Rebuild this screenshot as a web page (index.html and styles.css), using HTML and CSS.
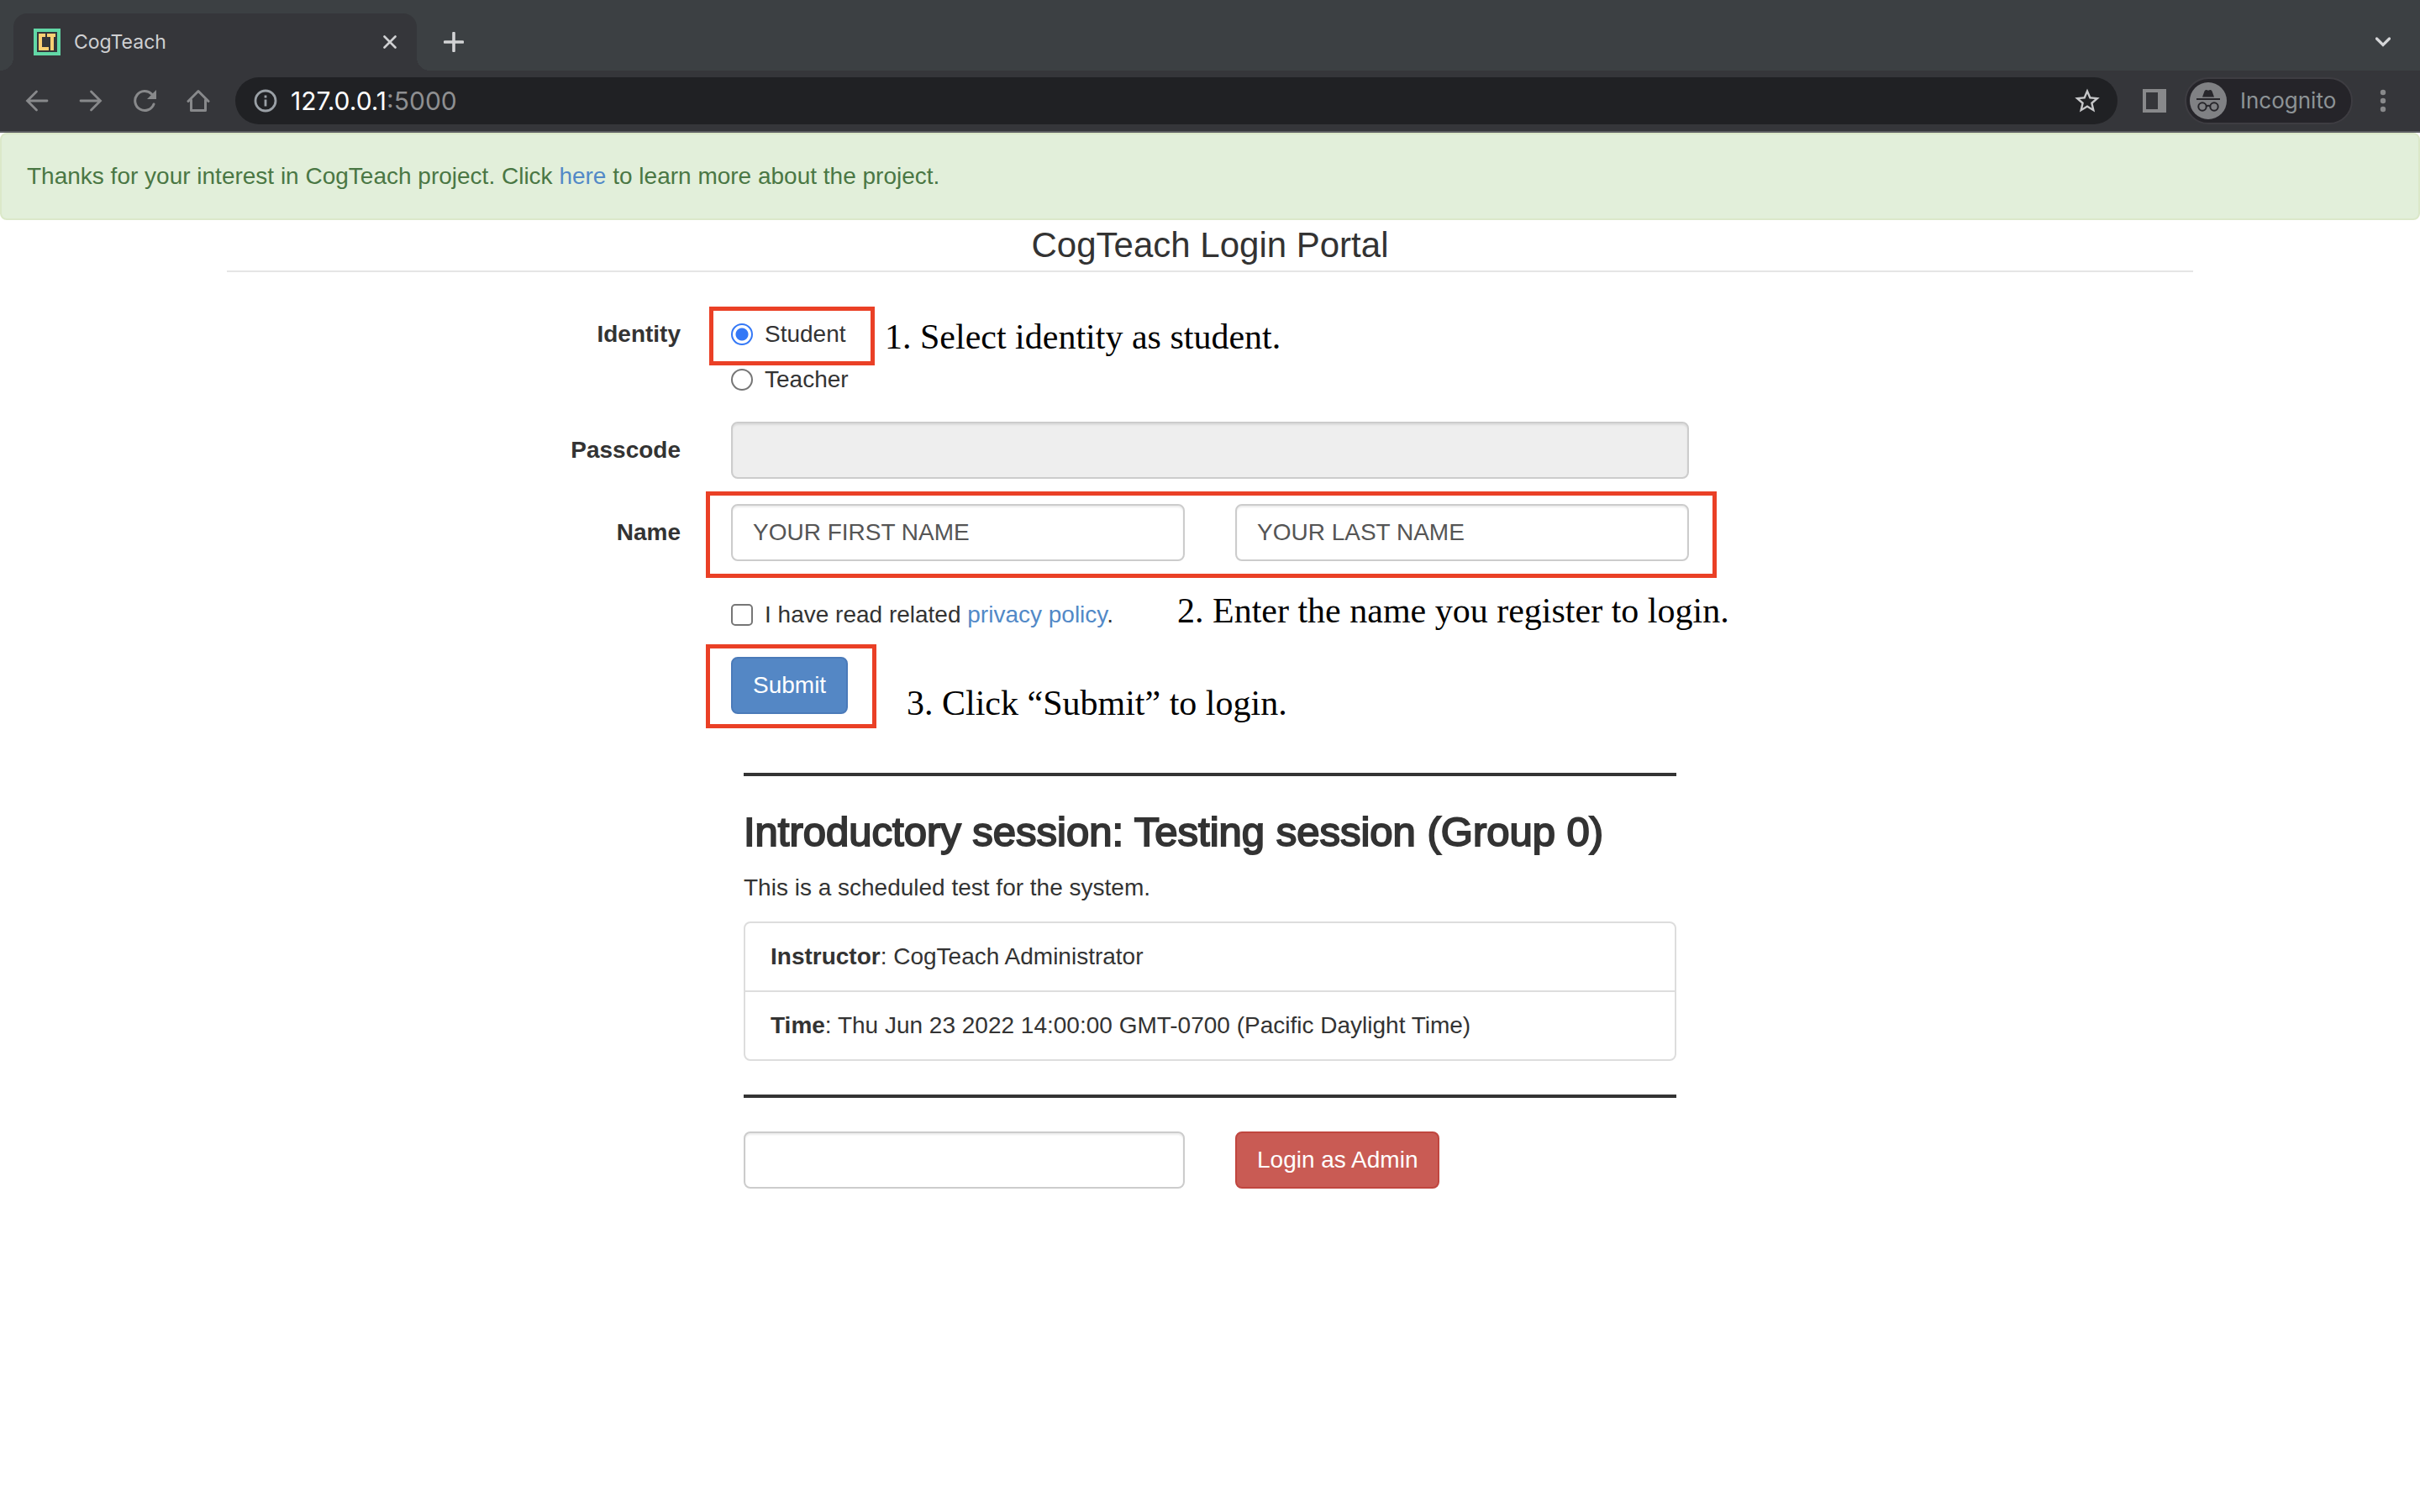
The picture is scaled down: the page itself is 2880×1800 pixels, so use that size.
FILE: index.html
```html
<!DOCTYPE html>
<html lang="en">
<head>
<meta charset="utf-8">
<title>CogTeach</title>
<link rel="stylesheet" href="styles.css">
</head>
<body>
<header class="browser">
  <div class="tabstrip">
    <div class="tab">
      <svg class="favicon" viewBox="0 0 32 32"><rect width="32" height="32" fill="#62d8a6"/><rect x="4" y="4" width="24" height="24" fill="#35363a"/><path d="M6 6h8v4h-4v12h8v4H6zM16 6h10v4h-2v16h-4V10h-4z" fill="#fbd073"/></svg>
      <span class="tab-title">CogTeach</span>
      <button class="icon-button" aria-label="Close tab"><svg width="16" height="16" viewBox="0 0 16 16"><path d="M1.500 1.500l13 13M14.500 1.500l-13 13" stroke="#cfd0d2" stroke-width="2.600" stroke-linecap="round"/></svg></button>
    </div>
    <button class="icon-button new-tab" aria-label="New tab"><svg width="24" height="24" viewBox="0 0 24 24"><path d="M12 1.500v21M1.500 12h21" stroke="#d2d3d5" stroke-width="3.600" stroke-linecap="round"/></svg></button>
    <button class="icon-button tab-search" aria-label="Search tabs"><svg width="18" height="12" viewBox="0 0 18 12"><path d="M1.500 2l7.500 7.500L16.500 2" fill="none" stroke="#d5d6d8" stroke-width="3.200" stroke-linecap="round"/></svg></button>
  </div>
  <div class="toolbar">
    <nav class="nav-buttons">
      <button class="icon-button" aria-label="Back"><svg width="28" height="28" viewBox="0 0 28 28"><path d="M13.500 3L2.500 14l11 11M3 14h23" fill="none" stroke="#88898b" stroke-width="2.800" stroke-linecap="round"/></svg></button>
      <button class="icon-button" aria-label="Forward"><svg width="28" height="28" viewBox="0 0 28 28"><path d="M14.500 3l11 11-11 11M25 14H2" fill="none" stroke="#88898b" stroke-width="2.800" stroke-linecap="round"/></svg></button>
      <button class="icon-button" aria-label="Reload"><svg width="28" height="28" viewBox="0 0 28 28"><path d="M22.500 6A11.500 11.500 0 1 0 25 18" fill="none" stroke="#88898b" stroke-width="3" stroke-linecap="round"/><path d="M28 1v11H17z" fill="#88898b"/></svg></button>
      <button class="icon-button" aria-label="Home"><svg width="28" height="28" viewBox="0 0 28 28"><path d="M2 14.500L14 2.500l12 12M5.500 13v12.500h17V13" fill="none" stroke="#88898b" stroke-width="3" stroke-linecap="round" stroke-linejoin="round"/></svg></button>
    </nav>
    <div class="address">
      <svg width="28" height="28" viewBox="0 0 28 28"><circle cx="14" cy="14" r="12" fill="none" stroke="#9aa0a6" stroke-width="2.800"/><path d="M14 12.500v8M14 7.500v3" stroke="#9aa0a6" stroke-width="2.800"/></svg>
      <span class="url">127.0.0.1<span class="port">:5000</span></span>
      <button class="icon-button" aria-label="Bookmark"><svg width="30" height="30" viewBox="0 0 24 24"><path d="M22 9.240l-7.190-.62L12 2 9.190 8.630 2 9.240l5.460 4.730L5.820 21 12 17.270 18.180 21l-1.630-7.030L22 9.240zM12 15.400l-3.760 2.270 1-4.280-3.320-2.880 4.380-.38L12 6.100l1.710 4.040 4.380.38-3.320 2.880 1 4.280L12 15.400z" fill="#c7c8ca" transform="translate(12 12) scale(1.180) translate(-12 -11.800)"/></svg></button>
    </div>
    <button class="icon-button" aria-label="Side panel"><svg width="28" height="28" viewBox="0 0 28 28"><path d="M0 0h28v28H0zM4 4v20h14V4z" fill="#88898b" fill-rule="evenodd"/></svg></button>
    <div class="incognito">
      <svg width="44" height="44" viewBox="0 0 44 44"><circle cx="22" cy="22" r="22" fill="#808184"/><path d="M15 17.500l2.500-7q.8-2 2.500-1.500l2 .7 2-.7q1.700-.5 2.500 1.500l2.500 7z" fill="#27262b"/><path d="M8 20h28" stroke="#27262b" stroke-width="2"/><g fill="none" stroke="#27262b" stroke-width="2"><circle cx="15" cy="29" r="4.700"/><circle cx="29" cy="29" r="4.700"/><path d="M19.500 28.500q2.500-1.500 5 0"/></g></svg>
      <span>Incognito</span>
    </div>
    <button class="icon-button" aria-label="Menu"><svg width="8" height="28" viewBox="0 0 8 28"><g fill="#88898b"><circle cx="4" cy="4" r="3.200"/><circle cx="4" cy="14" r="3.200"/><circle cx="4" cy="24" r="3.200"/></g></svg></button>
  </div>
</header>

<div class="alert">Thanks for your interest in CogTeach project. Click <a href="#">here</a> to learn more about the project.</div>

<main class="container">
  <form>
    <h1 class="legend">CogTeach Login Portal</h1>
    <div class="form-row" role="radiogroup" aria-labelledby="identity-label">
      <span class="row-label" id="identity-label">Identity</span>
      <div class="row-field">
        <label class="choice"><input type="radio" name="identity" checked>Student</label>
        <label class="choice"><input type="radio" name="identity">Teacher</label>
        <div class="mark mark-student"></div>
        <p class="note note-student">1. Select identity as student.</p>
      </div>
    </div>
    <div class="form-row">
      <label class="row-label" for="passcode">Passcode</label>
      <div class="row-field"><input class="control" id="passcode" type="password" disabled></div>
    </div>
    <div class="form-row">
      <label class="row-label" for="first-name">Name</label>
      <div class="row-field split">
        <input class="control" id="first-name" type="text" value="YOUR FIRST NAME">
        <input class="control" type="text" value="YOUR LAST NAME" aria-label="Last name">
        <div class="mark mark-name"></div>
      </div>
    </div>
    <div class="form-row">
      <div class="row-field">
        <label class="choice"><input type="checkbox"><span>I have read related <a href="#">privacy policy</a>.</span></label>
        <p class="note note-name">2. Enter the name you register to login.</p>
      </div>
    </div>
    <div class="form-row">
      <div class="row-field">
        <button class="btn btn-primary" type="button">Submit</button>
        <div class="mark mark-submit"></div>
        <p class="note note-submit">3. Click “Submit” to login.</p>
      </div>
    </div>
  </form>

  <div class="form-row">
    <section class="row-field session">
      <hr class="rule">
      <h2 class="session-title">Introductory session: Testing session (Group 0)</h2>
      <p class="session-text">This is a scheduled test for the system.</p>
      <ul class="details">
        <li><strong>Instructor</strong>: CogTeach Administrator</li>
        <li><strong>Time</strong>: Thu Jun 23 2022 14:00:00 GMT-0700 (Pacific Daylight Time)</li>
      </ul>
      <hr class="rule">
      <div class="split">
        <input class="control" type="password" aria-label="Admin passcode">
        <div><button class="btn btn-danger" type="button">Login as Admin</button></div>
      </div>
    </section>
  </div>
</main>
</body>
</html>
```
FILE: styles.css
```css
* { box-sizing: border-box; }

body {
  margin: 0;
  background: #fff;
  color: #333;
  font: 28px/40px "Liberation Sans", Arial, sans-serif;
}

a { color: #5289c7; text-decoration: none; }
svg { display: block; flex: none; }

/* Browser frame */
.browser {
  border-bottom: 2px solid #5c5e62;
  font-family: Inter, sans-serif;
}

.icon-button {
  display: flex;
  padding: 0;
  border: 0;
  background: none;
}

.tabstrip {
  display: flex;
  align-items: flex-end;
  height: 84px;
  padding: 0 35px 0 16px;
  background: #3c4043;
}

.tab {
  position: relative;
  display: flex;
  align-items: center;
  width: 480px;
  height: 68px;
  padding: 0 24px;
  border-radius: 16px 16px 0 0;
  background: #35363a;
}

/* Curved feet where the tab meets the toolbar */
.tab::before,
.tab::after {
  content: "";
  position: absolute;
  bottom: 0;
  width: 16px;
  height: 16px;
}
.tab::before { right: 100%; background: radial-gradient(circle at 0 0, #3c4043 16px, #35363a 16px); }
.tab::after { left: 100%; background: radial-gradient(circle at 100% 0, #3c4043 16px, #35363a 16px); }

.favicon { width: 32px; height: 32px; }
.tab-title { flex: 1; margin-left: 16px; color: #cfd0d2; font-size: 23px; }
.new-tab { margin: 0 auto 22px 32px; }
.tab-search { margin-bottom: 28px; }

.toolbar {
  display: flex;
  align-items: center;
  height: 72px;
  padding: 0 40px 0 30px;
  background: #35363a;
}

.nav-buttons { display: flex; gap: 36px; margin-right: 30px; }

.address {
  flex: 1;
  display: flex;
  align-items: center;
  height: 56px;
  margin-right: 30px;
  padding: 0 21px 0 22px;
  border-radius: 28px;
  background: #202124;
}
.url { flex: 1; margin-left: 16px; color: #fff; font-size: 30px; }
.port { color: #8e8f91; }

.incognito {
  display: flex;
  align-items: center;
  gap: 16px;
  width: 200px;
  height: 56px;
  margin: 0 32px 0 22px;
  padding: 0 4px;
  border: 2px solid #3e3d42;
  border-radius: 28px;
  background: #252429;
  color: #8d9396;
  font-size: 26px;
}

/* Page */
.alert {
  padding: 30px;
  border: 2px solid #dbe8c9;
  border-radius: 8px;
  background: #e2efda;
  color: #4a7744;
}

.container { max-width: 2340px; margin: 0 auto; }

.legend {
  margin: 0 0 40px;
  border-bottom: 2px solid #e5e5e5;
  font-size: 42px;
  font-weight: 400;
  line-height: 60px;
  text-align: center;
}

.form-row {
  display: grid;
  grid-template-columns: repeat(4, 1fr);
  column-gap: 60px;
  margin-bottom: 30px;
}
.row-label { padding-top: 14px; font-weight: 700; text-align: right; }
.row-field { position: relative; grid-column: 2 / 4; }

.choice {
  display: flex;
  align-items: center;
  gap: 14px;
  padding-top: 14px;
}
.choice input {
  appearance: none;
  width: 26px;
  height: 26px;
  margin: 0;
  border: 2px solid #767676;
  border-radius: 5px;
  background: #fff;
}
.choice input[type="radio"] { border-radius: 50%; }
.choice input[type="radio"]:checked {
  border-color: #3478f6;
  background: radial-gradient(circle, #3478f6 7px, #fff 8px);
}

.control {
  display: block;
  width: 100%;
  height: 68px;
  padding: 12px 24px;
  border: 2px solid #ccc;
  border-radius: 8px;
  background: #fff;
  box-shadow: inset 0 2px 2px rgba(0, 0, 0, .075);
  color: #555;
  font: inherit;
}
.control:disabled { background: #eee; }

.split {
  display: grid;
  grid-template-columns: 1fr 1fr;
  column-gap: 60px;
}

.btn {
  display: block;
  padding: 12px 24px;
  border: 2px solid;
  border-radius: 8px;
  color: #fff;
  font: inherit;
}
.btn-primary { border-color: #4a7ab9; background: #5487c5; }
.btn-danger { border-color: #c0463f; background: #c95b54; }

.session { padding: 0 15px; }
.rule { height: 4px; margin: 40px 0; border: 0; background: #333; }
.session-title {
  margin: 0 0 20px;
  font-size: 49px;
  font-weight: 400;
  line-height: 53px;
  -webkit-text-stroke: 2px #333;
}
.session-text { margin: 0 0 20px; }

.details {
  margin: 0;
  padding: 0;
  border: 2px solid #ddd;
  border-radius: 8px;
  list-style: none;
}
.details li { padding: 20px 30px; }
.details li + li { border-top: 2px solid #ddd; }

/* Instruction overlay */
.mark {
  position: absolute;
  border: 5px solid #ea4026;
}
.mark-student { left: -26px; top: 1px; width: 197px; height: 70px; }
.mark-name { inset: -15px -33px -20px -30px; }
.mark-submit { left: -30px; top: -15px; width: 203px; height: 100px; }

.note {
  position: absolute;
  margin: 0;
  color: #000;
  font: 42px/48px "Liberation Serif", "Times New Roman", serif;
  white-space: nowrap;
}
.note-student { left: 183px; top: 13px; }
.note-name { left: 531px; top: 5px; }
.note-submit { left: 209px; top: 31px; }
```
